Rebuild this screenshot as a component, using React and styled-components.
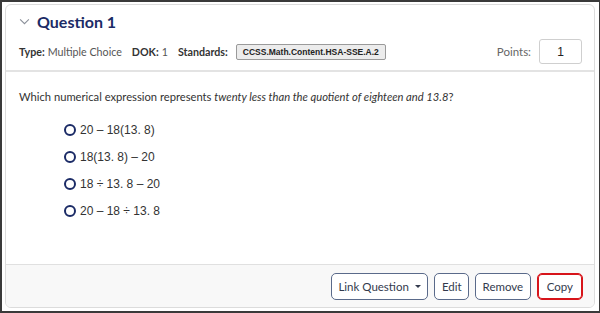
import React from "react";
import styled, { createGlobalStyle } from "styled-components";

const GlobalStyle = createGlobalStyle`
	html, body {
		margin: 0;
		padding: 0;
		background: #ffffff;
	}
	body {
		font-family: Lato, "Open Sans", Arial, sans-serif;
		color: #333333;
	}
`;

export default function App() {
	const options = [
		"20 – 18(13. 8)",
		"18(13. 8) – 20",
		"18 ÷ 13. 8 – 20",
		"20 – 18 ÷ 13. 8",
	];

	return (
		<>
			<GlobalStyle />
			<Frame>
				<Card>
					<Header>
						<TitleRow>
							<Chevron viewBox="0 0 12 8">
								<path d="M1 1.5 L6 6.5 L11 1.5" fill="none" stroke="#8a8f99" strokeWidth="1.2" />
							</Chevron>
							<Title>Question 1</Title>
						</TitleRow>
						<MetaRow>
							<Meta>
								<b>Type:</b> Multiple Choice
							</Meta>
							<Meta>
								<b>DOK:</b> 1
							</Meta>
							<Meta>
								<b>Standards:</b>
								<Badge>CCSS.Math.Content.HSA-SSE.A.2</Badge>
							</Meta>
							<Points>
								Points:
								<PointsBox>1</PointsBox>
							</Points>
						</MetaRow>
					</Header>
					<Body>
						<Prompt>
							Which numerical expression represents{" "}
							<i>twenty less than the quotient of eighteen and 13.8</i>?
						</Prompt>
						<Options>
							{options.map((o, i) => (
								<Option key={i}>
									<Radio />
									<span>{o}</span>
								</Option>
							))}
						</Options>
					</Body>
					<Footer>
						<Button>
							Link Question <Caret />
						</Button>
						<Button>Edit</Button>
						<Button>Remove</Button>
						<Button $active>Copy</Button>
					</Footer>
				</Card>
			</Frame>
		</>
	);
}

const Frame = styled.div`
	width: 600px;
	height: 313px;
	box-sizing: border-box;
	border: 2px solid #3a3a3a;
	border-right-width: 1px;
	border-bottom-width: 2px;
	padding: 2px 4px 3px 3px;
	background: #ffffff;
`;

const Card = styled.div`
	height: 100%;
	box-sizing: border-box;
	border: 1px solid #dcdcdc;
	border-radius: 6px;
	display: flex;
	flex-direction: column;
	overflow: hidden;
`;

const Header = styled.div`
	padding: 6px 12px 0 13px;
	height: 67px;
	box-sizing: border-box;
	border-bottom: 2px solid #e3e3e3;
`;

const TitleRow = styled.div`
	display: flex;
	align-items: center;
	gap: 7px;
	height: 20px;
`;

const Chevron = styled.svg`
	width: 11px;
	height: 7px;
`;

const Title = styled.div`
	font-size: 16px;
	font-weight: 700;
	color: #1b2b66;
`;

const MetaRow = styled.div`
	display: flex;
	align-items: center;
	gap: 10px;
	margin-top: 8px;
	font-size: 10.7px;
	color: #555555;
`;

const Meta = styled.div`
	display: flex;
	align-items: center;
	gap: 3px;
	b {
		color: #333333;
		font-weight: 700;
	}
`;

const Badge = styled.span`
	margin-left: 5px;
	padding: 1px 6px;
	border: 1px solid #9a9a9a;
	border-radius: 2px;
	background: #ececec;
	font-family: "Liberation Sans", Arial, sans-serif;
	font-size: 8.5px;
	font-weight: 700;
	color: #222222;
	line-height: 12px;
`;

const Points = styled.div`
	margin-left: auto;
	display: flex;
	align-items: center;
	gap: 8px;
	color: #666666;
	font-size: 11.5px;
`;

const PointsBox = styled.div`
	width: 43px;
	height: 25px;
	box-sizing: border-box;
	border: 1px solid #cfcfcf;
	border-radius: 3px;
	display: flex;
	align-items: center;
	justify-content: center;
	color: #222222;
	font-family: "Liberation Sans", Arial, sans-serif;
	font-size: 12px;
`;

const Body = styled.div`
	flex: 1;
	padding: 18px 13px 0;
`;

const Prompt = styled.div`
	font-size: 11.2px;
	color: #333333;
	i {
		font-style: italic;
	}
`;

const Options = styled.div`
	display: flex;
	flex-direction: column;
	gap: 10px;
	margin-top: 18px;
	padding-left: 45px;
`;

const Option = styled.div`
	display: flex;
	align-items: center;
	gap: 4px;
	height: 17px;
	font-family: "Liberation Sans", Arial, sans-serif;
	font-size: 12px;
	color: #333333;
	white-space: pre;
`;

const Radio = styled.span`
	width: 8px;
	height: 8px;
	border: 2px solid #1b2b66;
	border-radius: 50%;
`;

const Footer = styled.div`
	height: 43px;
	box-sizing: border-box;
	border-top: 1px solid #e0e0e0;
	background: #f8f8f8;
	display: flex;
	align-items: center;
	justify-content: flex-end;
	gap: 6px;
	padding: 1px 11px 0 0;
`;

const Button = styled.button`
	height: 27px;
	box-sizing: border-box;
	padding: 0 ${(p) => (p.$active ? "9px" : "6.5px")};
	border: 1px solid ${(p) => (p.$active ? "#d7141a" : "#5a6a8a")};
	box-shadow: ${(p) => (p.$active ? "inset 0 0 0 1px #d7141a" : "none")};
	border-radius: 5px;
	background: #ffffff;
	font-family: Lato, "Open Sans", Arial, sans-serif;
	font-size: 11.5px;
	color: #333a4d;
	display: flex;
	align-items: center;
	gap: 6px;
`;

const Caret = styled.span`
	width: 0;
	height: 0;
	border-left: 3px solid transparent;
	border-right: 3px solid transparent;
	border-top: 3px solid #333a4d;
`;
